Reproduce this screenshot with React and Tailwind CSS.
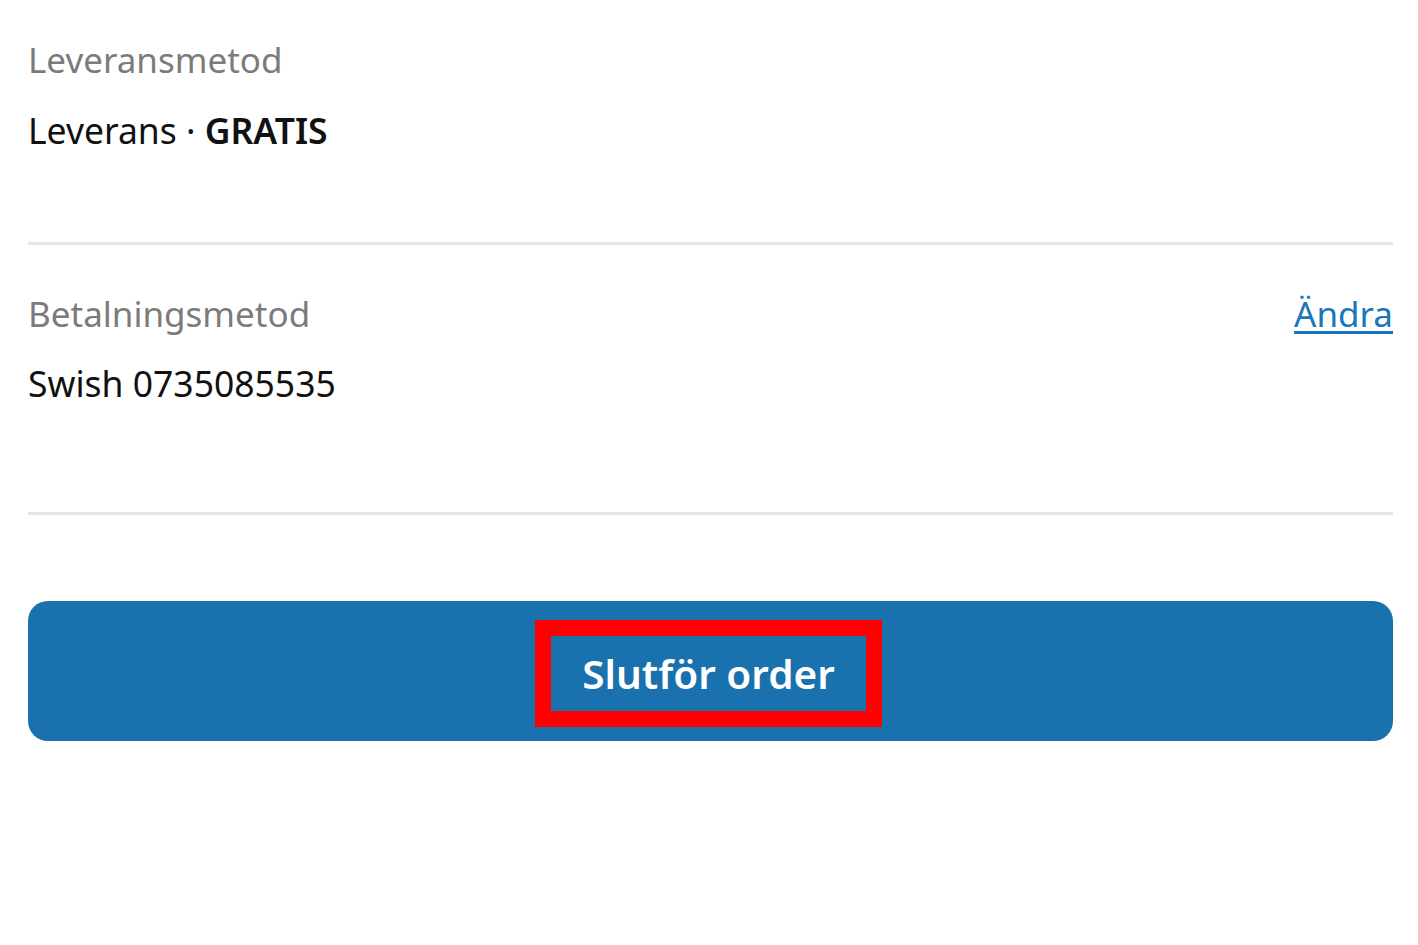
export default function App() {
  return (
    <div className="min-h-screen bg-white pl-[28px] pr-[25px]" style={{ fontFamily: '"Noto Sans", "Open Sans", sans-serif' }}>
      <div className="pt-[40px]">
        <div className="text-[35px] leading-[40px] text-[#7b7b7b]">Leveransmetod</div>
        <div className="mt-[28px] text-[35.5px] leading-[44px] text-[#111]">
          Leverans · <span className="font-semibold">GRATIS</span>
        </div>
      </div>
      <div className="mt-[90px] h-[3px] bg-[#e6e6e6]" />

      <div className="mt-[49px]">
        <div className="flex items-center justify-between">
          <span className="text-[35px] leading-[40px] text-[#7b7b7b]">Betalningsmetod</span>
          <a href="#" className="text-[35px] leading-[40px] text-[#1c75b8] underline underline-offset-4">Ändra</a>
        </div>
        <div className="mt-[27px] text-[35.5px] leading-[44px] text-[#111]">Swish 0735085535</div>
      </div>
      <div className="mt-[107px] h-[3px] bg-[#e6e6e6]" />

      <button className="mt-[86px] flex h-[140px] w-full items-center justify-center rounded-[20px] bg-[#1971ad]">
        <span className="mr-[4px] mt-[5px] border-[16px] border-[#ff0000] px-[31px] text-[40.5px] font-semibold leading-[75px] text-white">
          Slutför order
        </span>
      </button>
    </div>
  );
}
